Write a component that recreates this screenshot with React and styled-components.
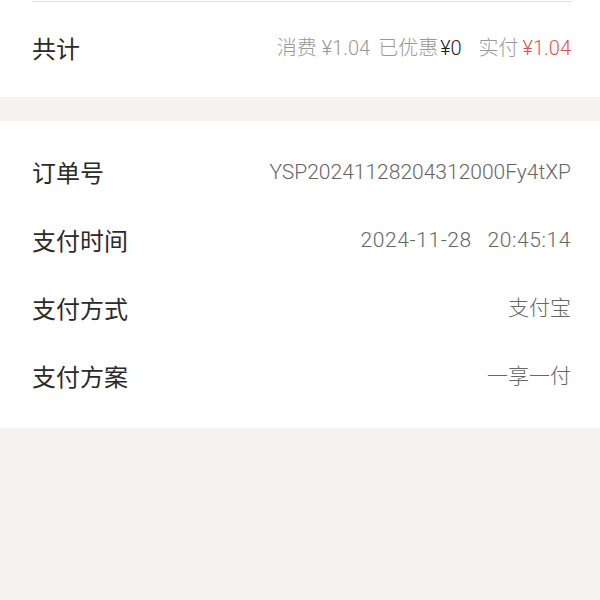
import React from 'react';
import styled, { createGlobalStyle } from 'styled-components';

const GlobalStyle = createGlobalStyle`
  html, body {
    margin: 0;
    padding: 0;
    background: #f4f3f2;
    font-family: Roboto, "Noto Sans CJK SC", sans-serif;
  }
`;

const Page = styled.div`
  width: 600px;
  min-height: 600px;
  background: #f4f3f2;
  display: flex;
  flex-direction: column;
  gap: 24px;
`;

const Panel = styled.section`
  background: #ffffff;
  padding: ${({ $pad }) => $pad || '0'};
`;

const Divider = styled.div`
  height: 1px;
  margin: 1px 28px 0 32px;
  background: #dfdfdf;
`;

const Row = styled.div`
  height: ${({ $h }) => $h || 68}px;
  display: flex;
  align-items: center;
  justify-content: space-between;
  padding: 0 29px 0 32px;
`;

const Label = styled.span`
  font-family: "Noto Sans CJK SC", sans-serif;
  font-size: 24px;
  line-height: 1;
  color: #2a2a2a;
`;

const Value = styled.span`
  font-family: Roboto, "Noto Sans CJK SC", sans-serif;
  font-size: 21px;
  line-height: 1;
  font-weight: 300;
  color: #666;
  word-spacing: ${({ $ws }) => $ws || 0}px;
  letter-spacing: ${({ $ls }) => $ls || 0}px;
`;

const Summary = styled.div`
  display: flex;
  align-items: baseline;
  font-family: Roboto, "Noto Sans CJK SC", sans-serif;
  font-size: 20px;
  line-height: 1;
  font-weight: 300;
  color: #999;
`;

const Part = styled.span`
  color: ${({ $tone }) =>
    $tone === 'dark' ? '#222' : $tone === 'red' ? '#e5504f' : '#999'};
  margin-left: ${({ $ml }) => $ml || 0}px;
`;

export default function App() {
  const details = [
    ['订单号', 'YSP20241128204312000Fy4tXP'],
    ['支付时间', '2024-11-28 20:45:14'],
    ['支付方式', '支付宝'],
    ['支付方案', '一享一付'],
  ];

  return (
    <Page>
      <GlobalStyle />
      <Panel $pad="0 0 3px">
        <Divider />
        <Row $h={92}>
          <Label>共计</Label>
          <Summary>
            <Part>消费</Part>
            <Part $ml={5}>¥1.04</Part>
            <Part $ml={8}>已优惠</Part>
            <Part $tone="dark" $ml={2}>¥0</Part>
            <Part $ml={17}>实付</Part>
            <Part $tone="red" $ml={4}>¥1.04</Part>
          </Summary>
        </Row>
      </Panel>
      <Panel $pad="17px 0 18px">
        {details.map(([k, v]) => (
          <Row key={k}>
            <Label>{k}</Label>
            {k === '支付时间' ? (
              <Value $ws={10} $ls={0.6}>{v}</Value>
            ) : (
              <Value>{v}</Value>
            )}
          </Row>
        ))}
      </Panel>
    </Page>
  );
}
